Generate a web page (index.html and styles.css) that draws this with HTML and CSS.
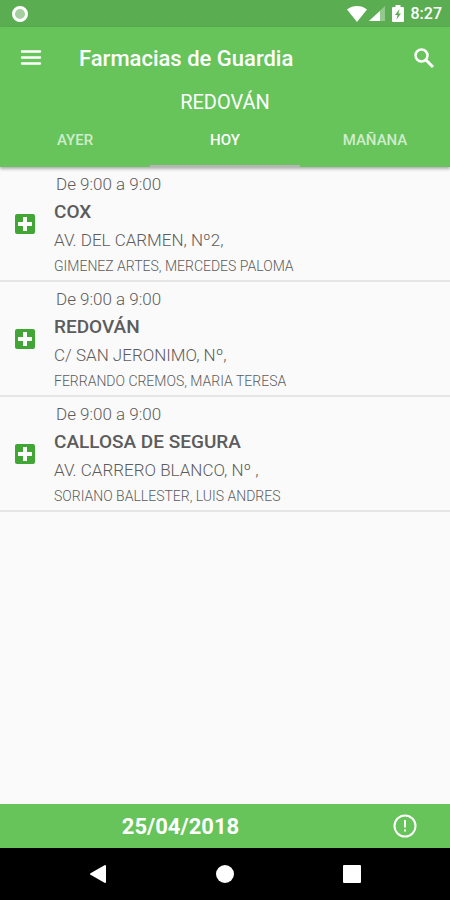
FILE: index.html
```html
<!DOCTYPE html>
<html lang="es">
<head>
    <meta charset="UTF-8">
    <meta name="viewport" content="width=device-width, initial-scale=1.0">
    <title>Farmacias de Guardia</title>
    <link rel="stylesheet" href="styles.css">
</head>
<body>
    <div class="status-bar">
        <span class="record-dot"></span>
        <div class="status-icons">
            <svg class="wifi" width="20" height="16" viewBox="0 0 20 16" fill="#fff"><path d="M0 3.500C3 1 6.500 0 10 0s7 1 10 3.500L10 16z"/></svg>
            <svg class="signal" width="16" height="16" viewBox="0 0 16 16" fill="#fff"><path d="M0 15 16 0v15z" opacity=".35"/><path d="M0 15 11 5v10z"/></svg>
            <svg class="battery" width="12" height="17" viewBox="0 0 12 17"><path d="M3.500 0h5v2H11q1 0 1 1v13q0 1-1 1H1q-1 0-1-1V3q0-1 1-1h2.500z" fill="#fff"/><path d="M7.500 4 3 10h2.500L4.500 14.500 9 8.500H6.500z" fill="#5bad51"/></svg>
            <span class="clock">8:27</span>
        </div>
    </div>

    <header>
        <div class="toolbar">
            <button class="icon-button" aria-label="Menú">
                <svg width="22" height="16" viewBox="0 0 22 16" fill="none" stroke="#fff" stroke-width="2.400" stroke-linecap="round"><path d="M2 1.500h18M2 7.500h18M2 13.500h18"/></svg>
            </button>
            <h1>Farmacias de Guardia</h1>
            <button class="icon-button" aria-label="Buscar">
                <svg width="20" height="20" viewBox="0 0 20 20" fill="none" stroke="#fff"><circle cx="7.500" cy="7.500" r="6" stroke-width="2.500"/><path d="m12 12 7 7" stroke-width="3"/></svg>
            </button>
        </div>
        <p class="town">REDOVÁN</p>
        <nav class="tabs">
            <button class="tab">AYER</button>
            <button class="tab active">HOY</button>
            <button class="tab">MAÑANA</button>
        </nav>
    </header>

    <main>
        <ul class="pharmacies">
            <li class="pharmacy">
                <svg class="cross" width="20" height="20" viewBox="0 0 20 20"><rect width="20" height="20" rx="2" fill="#42a637"/><path d="M8 3h4v5h5v4h-5v5H8v-5H3V8h5z" fill="#fff"/></svg>
                <div class="details">
                    <p class="hours">De 9:00 a 9:00</p>
                    <h2>COX</h2>
                    <p class="address">AV. DEL CARMEN, Nº2,</p>
                    <p class="owner">GIMENEZ ARTES, MERCEDES PALOMA</p>
                </div>
            </li>
            <li class="pharmacy">
                <svg class="cross" width="20" height="20" viewBox="0 0 20 20"><rect width="20" height="20" rx="2" fill="#42a637"/><path d="M8 3h4v5h5v4h-5v5H8v-5H3V8h5z" fill="#fff"/></svg>
                <div class="details">
                    <p class="hours">De 9:00 a 9:00</p>
                    <h2>REDOVÁN</h2>
                    <p class="address">C/ SAN JERONIMO, Nº,</p>
                    <p class="owner">FERRANDO CREMOS, MARIA TERESA</p>
                </div>
            </li>
            <li class="pharmacy">
                <svg class="cross" width="20" height="20" viewBox="0 0 20 20"><rect width="20" height="20" rx="2" fill="#42a637"/><path d="M8 3h4v5h5v4h-5v5H8v-5H3V8h5z" fill="#fff"/></svg>
                <div class="details">
                    <p class="hours">De 9:00 a 9:00</p>
                    <h2>CALLOSA DE SEGURA</h2>
                    <p class="address">AV. CARRERO BLANCO, Nº ,</p>
                    <p class="owner">SORIANO BALLESTER, LUIS ANDRES</p>
                </div>
            </li>
        </ul>
    </main>

    <footer>
        <span class="date">25/04/2018</span>
        <button class="icon-button" aria-label="Información">
            <svg width="24" height="24" viewBox="0 0 24 24" fill="none" stroke="#fff" stroke-width="2"><circle cx="12" cy="12" r="10.500"/><path d="M12 6v7.500M12 15.500v2"/></svg>
        </button>
    </footer>

    <div class="system-nav">
        <button class="icon-button" aria-label="Atrás">
            <svg width="18" height="20" viewBox="0 0 18 20"><path d="M16 2v16L2 10z" fill="#fff" stroke="#fff" stroke-width="2" stroke-linejoin="round"/></svg>
        </button>
        <button class="icon-button" aria-label="Inicio">
            <svg width="18" height="18" viewBox="0 0 18 18"><circle cx="9" cy="9" r="9" fill="#fff"/></svg>
        </button>
        <button class="icon-button" aria-label="Recientes">
            <svg width="18" height="18" viewBox="0 0 18 18"><rect width="18" height="18" rx="1" fill="#fff"/></svg>
        </button>
    </div>
</body>
</html>
```
FILE: styles.css
```css
* {
    box-sizing: border-box;
}

body {
    display: flex;
    flex-direction: column;
    min-height: 100vh;
    margin: 0;
    font-family: Roboto, "Liberation Sans", sans-serif;
    background-color: #fafafa;
    color: #5c5c5c;
}

h1, h2, p, ul {
    margin: 0;
    padding: 0;
}

svg {
    display: block;
}

button {
    padding: 0;
    border: none;
    background: none;
    font-family: inherit;
    cursor: pointer;
}

.icon-button {
    display: flex;
    align-items: center;
    justify-content: center;
}

/* Barra de estado */
.status-bar {
    display: flex;
    align-items: center;
    justify-content: space-between;
    height: 27px;
    padding: 0 8px 0 12px;
    background-color: #5bad51;
}

.record-dot {
    width: 16px;
    height: 16px;
    border: 3px solid #fff;
    border-radius: 50%;
    background-color: #a5cf9f;
}

.status-icons {
    display: flex;
    align-items: center;
    gap: 7px;
}

.wifi {
    margin-right: -5px;
}

.clock {
    color: #fff;
    font-size: 16px;
    font-weight: 500;
}

/* Cabecera */
header {
    background-color: #66c45b;
    color: #fff;
    box-shadow: 0 2px 3px rgba(0, 0, 0, 0.3);
}

.toolbar {
    display: flex;
    align-items: center;
    height: 62px;
    padding: 0 16px 0 20px;
}

h1 {
    flex: 1;
    margin-left: 37px;
    font-size: 22px;
    font-weight: 500;
}

.town {
    font-size: 20px;
    line-height: 26px;
    text-align: center;
}

.tabs {
    display: flex;
}

.tab {
    flex: 1;
    height: 52px;
    border-bottom: 2px solid transparent;
    color: rgba(255, 255, 255, 0.7);
    font-size: 15px;
    font-weight: 500;
}

.tab.active {
    border-bottom-color: #b5b5b5;
    color: #fff;
}

/* Lista de farmacias */
main {
    flex: 1;
}

.pharmacies {
    list-style: none;
}

.pharmacy {
    display: flex;
    align-items: center;
    gap: 19px;
    height: 115px;
    padding: 0 15px;
    border-bottom: 2px solid #e5e5e5;
}

.hours {
    padding-left: 2px;
    font-size: 17px;
    font-weight: 300;
    line-height: 28px;
}

h2 {
    font-size: 19px;
    font-weight: 500;
    line-height: 28px;
}

.address {
    font-size: 17px;
    font-weight: 300;
    line-height: 28px;
}

.owner {
    font-size: 14px;
    font-weight: 300;
    line-height: 24px;
}

/* Pie con la fecha */
footer {
    display: flex;
    align-items: center;
    height: 44px;
    padding-right: 33px;
    background-color: #66c45b;
    color: #fff;
}

.date {
    flex: 1;
    padding-right: 32px;
    font-size: 22px;
    font-weight: 700;
    text-align: center;
}

.system-nav {
    display: flex;
    align-items: center;
    justify-content: space-between;
    height: 52px;
    padding: 0 89px;
    background-color: #000;
}
```
